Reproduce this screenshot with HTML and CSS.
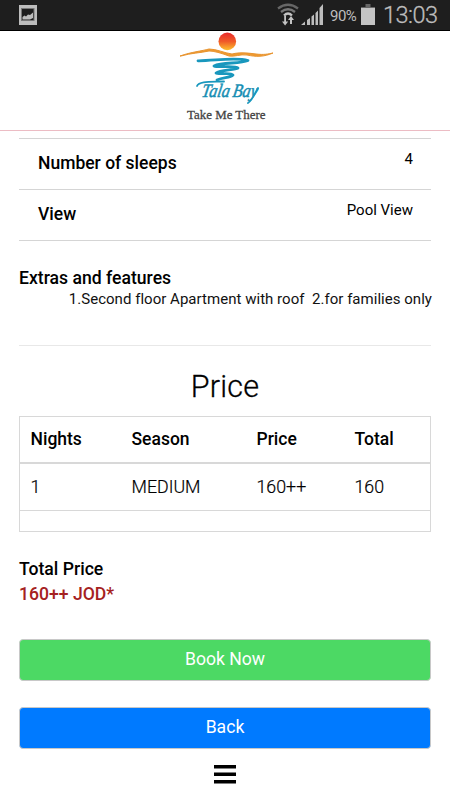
FILE: index.html
```html
<!DOCTYPE html>
<html lang="en">
<head>
<meta charset="utf-8">
<title>Tala Bay</title>
<link rel="stylesheet" href="styles.css">
</head>
<body>
<div class="status">
  <svg class="shot" width="20" height="22" viewBox="0 0 20 22">
    <rect x="1" y="1" width="18" height="20" fill="#bdbdbd"/>
    <rect x="3.500" y="4.500" width="12.500" height="12" fill="#1e1e1e" stroke="#777"/>
    <path d="M4.500 15.500V13L6.500 11.500L8 12.500L10 10.500L12 11L15 8.500V14L12 15.500Z" fill="#bdbdbd"/>
  </svg>
  <svg class="wifi" width="22" height="24" viewBox="0 0 22 24">
    <g fill="none" stroke-width="2.300">
      <path d="M1 5.500Q11 -2 21 5.500" stroke="#666"/>
      <path d="M4 9Q11 3.500 18 9" stroke="#777"/>
      <path d="M7 12.500Q11 8.500 15 12.500" stroke="#c4c4c4"/>
    </g>
    <path d="M7.200 13H9V18.500H11.200L8.100 22.500L5 18.500H7.200ZM13 21V17H11L14 13L17 17H15V21Z" fill="#c4c4c4"/>
  </svg>
  <svg class="signal" width="22" height="22" viewBox="0 0 22 22" fill="#bdbdbd">
    <path d="M0 21L4 17.500V21ZM6 16L9 14V21H6ZM10.500 12.500L13 10.500V21H10.500ZM14.500 9L17 6.500V21H14.500ZM18.500 4L22 0V21H18.500Z"/>
  </svg>
  <span class="percent">90%</span>
  <svg class="battery" width="14" height="22" viewBox="0 0 14 22">
    <path d="M4.500 0H9.500V3H14V6H0V3H4.500Z" fill="#666"/>
    <rect y="4" width="14" height="17" fill="#c4c4c4"/>
  </svg>
  <span class="clock">13:03</span>
</div>
<header class="brand">
  <svg width="120" height="99" viewBox="0 0 120 99">
    <defs>
      <linearGradient id="sun" x1="0" y1="0" x2="0" y2="1">
        <stop offset="0" stop-color="#e82b2c"/><stop offset=".5" stop-color="#f05a28"/><stop offset="1" stop-color="#fdc02c"/>
      </linearGradient>
    </defs>
    <path d="M15 25C26 21 37 20 44 18C52 18 59 22 67 23C75 21 83 22 91 23C99 24 103 23 108 22C99 26 91 26 82 24C75 23 70 26 64 25C56 22 49 20 44 20C35 22 26 22 16 25Z" fill="#ef9a31" stroke="#e8942f"/>
    <circle cx="62.300" cy="10.400" r="8.800" fill="url(#sun)"/>
    <path d="M33 29.800C48 30 70 26 83 29.500C75 33 57 31 49 35C53 37 70 34 73 37C70 39 55 39 51 42C53 44 66 41 68 44C65 47 58 46 52 49" class="wave"/>
    <path d="M32 55C34 50 46 51 59 50.500" class="wave thin"/>
    <text class="script" transform="translate(36 66) skewX(-10)" textLength="28" lengthAdjust="spacingAndGlyphs">Tala</text>
    <text class="script" transform="translate(67 66) skewX(-10)" textLength="25" lengthAdjust="spacingAndGlyphs">Bay</text>
    <path d="M93 57C90 62 87 70 83 72" class="wave thin"/>
    <text x="22" y="88" class="tagline" textLength="78.500" lengthAdjust="spacingAndGlyphs">Take Me There</text>
  </svg>
</header>
<main>
  <dl class="details">
    <div class="detail"><dt>Number of sleeps</dt><dd>4</dd></div>
    <div class="detail"><dt>View</dt><dd>Pool View</dd></div>
  </dl>
  <section class="extras">
    <h3>Extras and features</h3>
    <p>1.Second floor Apartment with roof&nbsp; 2.for families only</p>
  </section>
  <h2>Price</h2>
  <table>
    <thead><tr><th class="nights">Nights</th><th class="season">Season</th><th class="price">Price</th><th>Total</th></tr></thead>
    <tbody>
      <tr><td>1</td><td>MEDIUM</td><td>160++</td><td>160</td></tr>
      <tr class="blank"><td colspan="4"></td></tr>
    </tbody>
  </table>
  <section class="total">
    <h3>Total Price</h3>
    <p>160++ JOD*</p>
  </section>
  <button class="book">Book Now</button>
  <button class="back">Back</button>
</main>
<nav>
  <svg width="22" height="19" viewBox="0 0 22 19"><path d="M0 0H22V3.500H0ZM0 7.500H22V11H0ZM0 15H22V18.500H0Z"/></svg>
</nav>
</body>
</html>
```

FILE: styles.css
```css
* { box-sizing: border-box; }
body { margin: 0; width: 450px; height: 800px; overflow: hidden; background: #fff; color: #000; font-family: Roboto, sans-serif; font-size: 17.8px; line-height: 24px; }
h2, h3, p, dl, dd { margin: 0; }
.status { display: flex; align-items: flex-start; height: 31px; background: #1e1e1e; border-bottom: 1px solid #000; color: #bdbdbd; }
.shot { margin: 4px 0 0 18px; }
.wifi { margin: 3px 0 0 239px; }
.signal { margin: 4px 0 0 2px; }
.percent { width: 30px; margin: 4px 0 0 7px; font-size: 15px; letter-spacing: -0.5px; }
.battery { margin: 4px 0 0 1px; }
.clock { margin: 3px 0 0 8px; font-size: 23.5px; font-weight: 300; letter-spacing: -0.5px; -webkit-text-stroke: .3px; }
.brand { height: 100px; padding-left: 165px; border-bottom: 1px solid #ecbcc4; }
.brand svg { display: block; }
.wave { fill: none; stroke: #1997bd; stroke-width: 2.8; stroke-linecap: round; stroke-linejoin: round; }
.thin { stroke-width: 1.8; }
.script { font: italic 19px "Liberation Serif", serif; fill: #168eb3; stroke: #168eb3; stroke-width: .5px; }
.tagline { font: 13.5px "Liberation Serif", serif; fill: #444; stroke: #444; stroke-width: .3px; }
main { padding: 7px 19px 0; }
.details { border-top: 1px solid #d5d5d5; }
.detail { display: flex; justify-content: space-between; height: 51px; padding: 0 18px 0 19px; border-bottom: 1px solid #d5d5d5; }
dt { margin-top: 12px; font-size: 17.5px; font-weight: 500; }
dd { margin-top: 8px; font-size: 15px; }
h3 { font-size: 17.6px; font-weight: 500; line-height: 24px; }
.extras { height: 105px; padding-top: 25px; border-bottom: 1px solid #e8e8e8; }
.extras p { margin: -3px -1px 0 0; text-align: right; font-size: 15px; letter-spacing: .03px; color: #111; white-space: nowrap; }
h2 { margin: 22px 0 11px; font-size: 30.5px; font-weight: 300; line-height: 37px; letter-spacing: .2px; text-align: center; -webkit-text-stroke: .3px; }
table { width: 412px; table-layout: fixed; border-collapse: separate; border-spacing: 0; border: 1px solid #d8d8d8; }
th, td { height: 47px; padding: 0 0 0 10.5px; text-align: left; }
th { height: 47px; padding-bottom: 1px; border-bottom: 2px solid #d8d8d8; font-size: 17.5px; font-weight: 500; }
td { padding-bottom: 1px; border-bottom: 1px solid #d8d8d8; font-weight: 300; -webkit-text-stroke: .2px; }
.nights { width: 101px; }
.season { width: 125px; }
.price { width: 98px; }
.blank td { height: 20px; border: 0; }
.total { padding-top: 25px; }
.total p { margin-top: 1px; color: #a52121; font-size: 17.6px; font-weight: 500; }
button { display: block; width: 412px; height: 42px; padding: 0 0 2px; border: 1px solid #c8c8c8; border-radius: 4px; color: #fff; font: 17.6px Roboto, sans-serif; }
.book { margin-top: 33px; background: #4cd964; }
.back { margin-top: 26px; background: #007aff; }
nav { padding: 16px 0 0 214px; }
nav svg { display: block; }
```
